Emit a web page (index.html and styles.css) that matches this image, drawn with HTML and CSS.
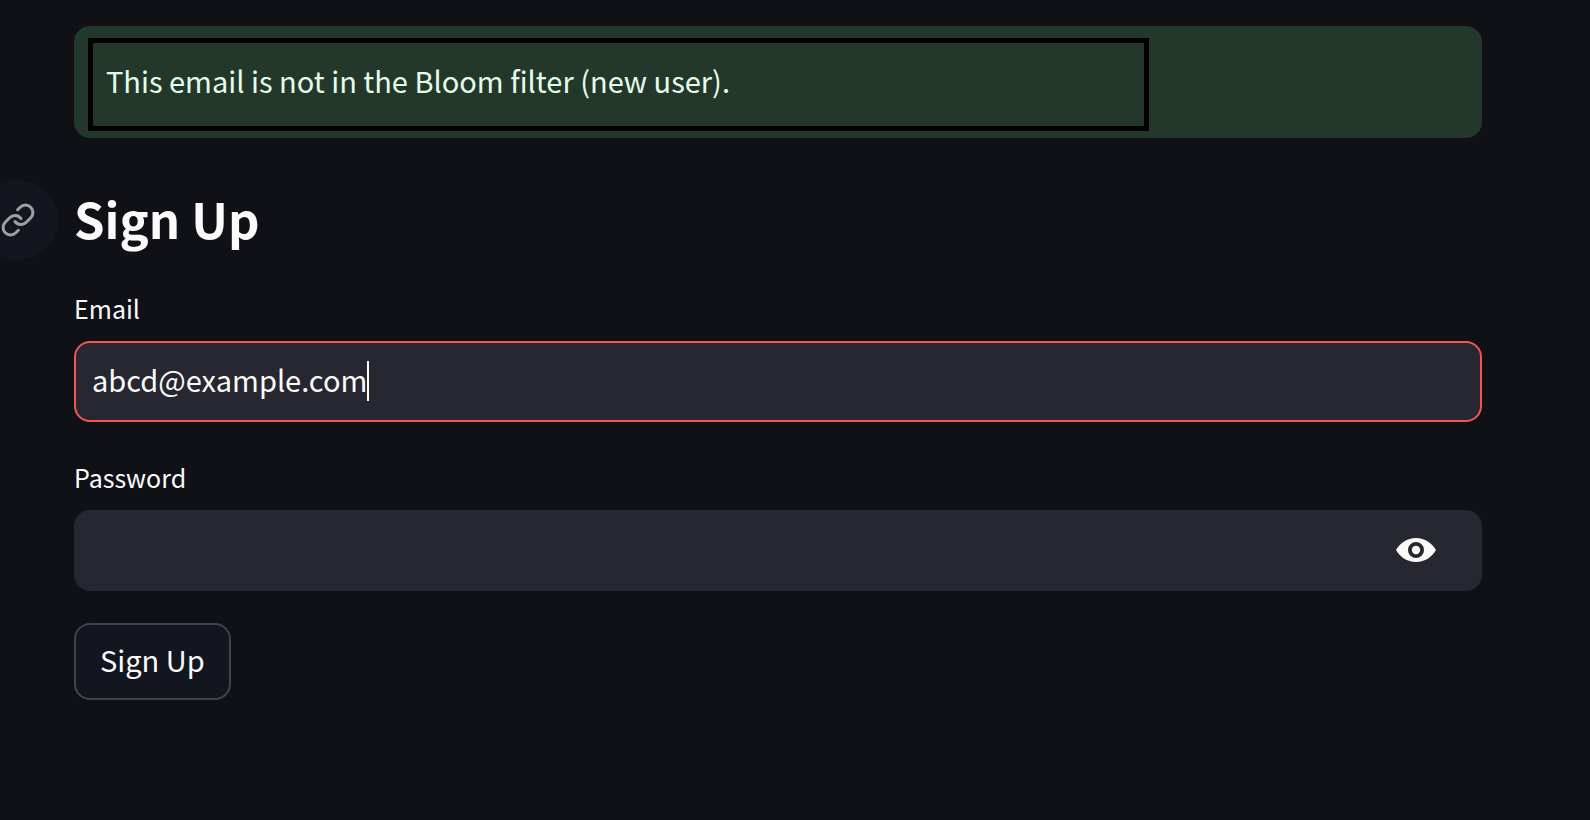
FILE: index.html
```html
<!DOCTYPE html>
<html lang="en">
<head>
<meta charset="utf-8">
<meta name="viewport" content="width=device-width, initial-scale=1">
<title>Sign Up</title>
<link rel="stylesheet" href="styles.css">
</head>
<body>
<main class="page">
  <div class="alert" role="status">
    <p class="alert-text">This email is not in the Bloom filter (new user).</p>
  </div>

  <div class="heading">
    <a class="anchor" href="#sign-up" aria-label="Link to heading">
      <svg class="anchor-icon" viewBox="0 0 24 24" aria-hidden="true">
        <path d="M10 13a5 5 0 0 0 7.54.54l3-3a5 5 0 0 0-7.07-7.07l-1.72 1.71"/>
        <path d="M14 11a5 5 0 0 0-7.54-.54l-3 3a5 5 0 0 0 7.07 7.07l1.71-1.71"/>
      </svg>
    </a>
    <h2 class="title" id="sign-up">Sign Up</h2>
  </div>

  <form class="form">
    <div class="field">
      <label class="label" for="email">Email</label>
      <div class="control">
        <input class="input" id="email" type="text" value="abcd@example.com" autocomplete="off" spellcheck="false">
        <span class="caret-line" aria-hidden="true"><span class="caret-text">abcd@example.com</span></span>
      </div>
    </div>
    <div class="field">
      <label class="label" for="password">Password</label>
      <div class="control">
        <input class="input" id="password" type="password" autocomplete="off">
        <button class="reveal" type="button" aria-label="Show password">
          <svg class="reveal-icon" viewBox="0 0 40 24" aria-hidden="true">
            <path fill-rule="evenodd" d="M0 12C4 5 11 0 20 0s16 5 20 12c-4 7-11 12-20 12S4 19 0 12zM20 4a8 8 0 1 0 0 16a8 8 0 1 0 0-16z"/>
            <circle cx="20" cy="12" r="4.2"/>
          </svg>
        </button>
      </div>
    </div>
    <button class="submit" type="button">Sign Up</button>
  </form>
</main>
</body>
</html>
```
FILE: styles.css
```css
* {
  box-sizing: border-box;
}

body {
  margin: 0;
  min-height: 100vh;
  overflow-x: hidden;
  background: #0f1116;
  color: #fafafa;
  font-family: "Noto Sans CJK SC", "Noto Sans", sans-serif;
  font-size: 29px;
  font-weight: 400;
  line-height: 48px;
}

.page {
  padding: 26px 108px 26px 74px;
}

.alert {
  padding: 12px 14px 7px;
  border-radius: 16px;
  background: #23382b;
  color: #e3fde9;
}

.alert-text {
  width: 76.9%;
  margin: 0;
  padding: 13px 13px 22px;
  border: 5px solid #000;
}

.heading {
  display: flex;
  align-items: center;
  gap: 16px;
  margin: 42px 0 28px -96px;
}

.anchor {
  display: flex;
  align-items: center;
  justify-content: center;
  width: 80px;
  height: 80px;
  border-radius: 50%;
  background: #13161f;
}

.anchor-icon {
  width: 36px;
  height: 36px;
  fill: none;
  stroke: #9fa0a2;
  stroke-width: 2;
  stroke-linecap: round;
  stroke-linejoin: round;
}

.title {
  margin: 0;
  padding-bottom: 4px;
  font-size: 49px;
  font-weight: 700;
  line-height: 64px;
}

.form {
  display: flex;
  flex-direction: column;
  align-items: flex-start;
}

.field {
  display: flex;
  flex-direction: column;
  gap: 13px;
  width: 100%;
  margin-bottom: 35px;
}

.field:nth-of-type(2) {
  margin-bottom: 32px;
}

.label {
  font-size: 25px;
  line-height: 40px;
}

.control {
  position: relative;
}

.input {
  display: block;
  width: 100%;
  height: 81px;
  padding: 0 16px 6px;
  border: 2px solid #262730;
  border-radius: 16px;
  outline: none;
  background: #262730;
  color: inherit;
  font: inherit;
}

#email {
  border-color: #f2564f;
}

.caret-line {
  position: absolute;
  inset: 0 18px;
  display: flex;
  align-items: center;
  padding-bottom: 2px;
  pointer-events: none;
}

.caret-text {
  border-right: 2px solid #fff;
  color: transparent;
  line-height: 40px;
}

.reveal {
  position: absolute;
  top: 0;
  right: 30px;
  bottom: 0;
  display: flex;
  align-items: center;
  padding: 0 16px 2px;
  border: 0;
  background: none;
}

.reveal-icon {
  width: 40px;
  height: 24px;
  fill: #fafafa;
}

.submit {
  padding: 10px 24px 15px;
  border: 2px solid #41444c;
  border-radius: 16px;
  background: #13161f;
  color: inherit;
  font: inherit;
}
```
